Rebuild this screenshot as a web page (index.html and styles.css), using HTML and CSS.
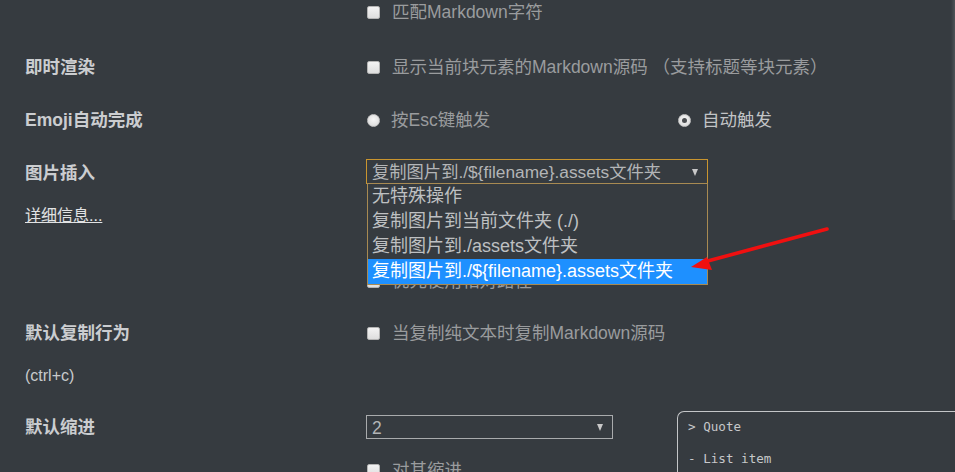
FILE: index.html
```html
<!DOCTYPE html>
<html lang="zh-CN">
<head>
<meta charset="utf-8">
<title>偏好设置</title>
<link rel="stylesheet" href="styles.css">
</head>
<body>
<div class="page">
  <div class="row row-first">
    <div class="label"></div>
    <div class="opt"><span class="cb"></span><span>匹配Markdown字符</span></div>
  </div>

  <div class="row row-live">
    <div class="label">即时渲染</div>
    <div class="opt"><span class="cb"></span><span>显示当前块元素的Markdown源码 （支持标题等块元素）</span></div>
  </div>

  <div class="row row-emoji">
    <div class="label">Emoji自动完成</div>
    <div class="opt"><span class="rb"></span><span>按Esc键触发</span></div>
    <div class="opt opt-on"><span class="rb rb-on"></span><span>自动触发</span></div>
  </div>

  <div class="row row-image">
    <div class="label-col">
      <div class="label">图片插入</div>
      <a class="more" href="#">详细信息...</a>
    </div>
    <div class="ctrl-col">
      <div class="select select-wide select-focus">
        <span class="select-text">复制图片到./${filename}.assets文件夹</span>
        <span class="caret"></span>
      </div>
      <div class="opt sub sub-first"><span class="cb"></span><span>对本地位置的图片应用上述规则</span></div>
      <div class="opt sub"><span class="cb"></span><span>对网络位置的图片应用上述规则</span></div>
      <div class="opt sub"><span class="cb"></span><span>优先使用相对路径</span></div>
      <ul class="popup">
        <li>无特殊操作</li>
        <li>复制图片到当前文件夹 (./)</li>
        <li>复制图片到./assets文件夹</li>
        <li class="picked">复制图片到./${filename}.assets文件夹</li>
      </ul>
    </div>
  </div>

  <div class="row row-copy">
    <div class="label-col">
      <div class="label">默认复制行为</div>
      <div class="hint">(ctrl+c)</div>
    </div>
    <div class="opt"><span class="cb"></span><span>当复制纯文本时复制Markdown源码</span></div>
  </div>

  <div class="row row-indent">
    <div class="label-col">
      <div class="label">默认缩进</div>
    </div>
    <div class="ctrl-col">
      <div class="select select-small">
        <span class="select-text">2</span>
        <span class="caret"></span>
      </div>
      <div class="opt sub-indent"><span class="cb"></span><span>对其缩进</span></div>
    </div>
    <div class="preview">
      <div class="code">&gt; Quote</div>
      <div class="code">- List item</div>
    </div>
  </div>
</div>

<div class="scroll-edge"></div>

<svg class="annot" width="955" height="472" viewBox="0 0 955 472" xmlns="http://www.w3.org/2000/svg">
  <line x1="827" y1="229" x2="704" y2="262" stroke="#f01010" stroke-width="3.6" stroke-linecap="round"/>
  <polygon points="691,267 707,257 712,270" fill="#f01010"/>
</svg>
</body>
</html>
```

FILE: styles.css
```css
html, body {
  margin: 0;
  padding: 0;
  background: #363b40;
  overflow: hidden;
}

body {
  width: 955px;
  height: 472px;
  position: relative;
  font-family: "Liberation Sans", "Noto Sans CJK SC", sans-serif;
}

.page {
  padding-left: 25px;
}

.row {
  display: grid;
  grid-template-columns: 341px 311px 1fr;
  align-items: start;
}

.label {
  height: 26px;
  line-height: 26px;
  font-size: 17.5px;
  font-weight: bold;
  color: #cbcdd0;
  white-space: nowrap;
}

.opt {
  display: flex;
  align-items: center;
  height: 26px;
  line-height: 26px;
  font-size: 17.5px;
  color: #9a9c9e;
  white-space: nowrap;
}

.opt-on {
  color: #c2c4c6;
}

.cb {
  flex: none;
  width: 11px;
  height: 11px;
  margin-left: 1px;
  margin-right: 12px;
  border: 1px solid #b4b4b4;
  border-radius: 2px;
  background: linear-gradient(#f3f3f3, #dedede);
}

.rb {
  flex: none;
  width: 13px;
  height: 13px;
  margin-left: 1px;
  margin-right: 11px;
  border-radius: 50%;
  background: radial-gradient(circle at 50% 40%, #f6f6f6, #d6d6d6);
  box-sizing: border-box;
  border: 1px solid #c4c4c4;
  position: relative;
}

.rb-on::after {
  content: "";
  position: absolute;
  left: 3px;
  top: 3px;
  width: 5px;
  height: 5px;
  border-radius: 50%;
  background: #4a4d50;
}

/* rows */
.row-first {
  margin-top: -1px;
}

.row-live {
  margin-top: 29px;
}

.row-emoji {
  margin-top: 27px;
}

.row-image {
  margin-top: 26px;
}

.row-copy {
  margin-top: 26px;
}

.row-indent {
  margin-top: 25px;
}

.label-col .label {
  margin-top: 1px;
}

.more {
  display: block;
  margin-top: 20px;
  height: 20px;
  line-height: 20px;
  font-size: 16px;
  color: #e2e3e4;
  text-decoration: underline;
  white-space: nowrap;
  width: max-content;
}

.hint {
  margin-top: 20px;
  height: 20px;
  line-height: 20px;
  font-size: 16px;
  color: #c8cacc;
}

.row-copy .label-col .label {
  margin-top: 0;
}

.row-copy .opt {
  margin-top: 0;
}

.ctrl-col {
  position: relative;
}

.select {
  box-sizing: border-box;
  display: flex;
  align-items: center;
  justify-content: space-between;
  border: 1px solid #a9abad;
  padding: 0 9px 0 5px;
  color: #b3b5b7;
  white-space: nowrap;
}

.select-wide {
  width: 342px;
  height: 25px;
  font-size: 17.3px;
  line-height: 23px;
}

.select-focus {
  border-color: #c9952f;
}

.select-small {
  width: 247px;
  height: 24px;
  margin-top: 4px;
  font-size: 17.5px;
  line-height: 22px;
}

.select-text {
  padding-top: 2px;
}

.caret {
  width: 0;
  height: 0;
  border-left: 3.5px solid transparent;
  border-right: 3.5px solid transparent;
  border-top: 7px solid #c8c8c8;
  margin-top: 1px;
}

.sub {
  margin-top: 6px;
}

.sub-first {
  margin-top: 20px;
}

.sub-indent {
  margin-top: 18px;
}

.row-indent .label-col .label {
  margin-top: 3px;
}

/* popup list over content */
.popup {
  position: absolute;
  left: 1px;
  top: 24px;
  box-sizing: border-box;
  width: 341px;
  margin: 0;
  padding: 0;
  list-style: none;
  background: #363b40;
  border: 1px solid #a88a52;
  font-size: 18px;
  color: #bec0c2;
}

.popup li {
  height: 25px;
  line-height: 25px;
  padding-left: 4px;
  white-space: nowrap;
}

.popup li.picked {
  background: #1e90ff;
  color: #ffffff;
}

/* preview box */
.preview {
  box-sizing: border-box;
  width: 300px;
  height: 120px;
  border: 1px solid #c4c6c8;
  border-right: none;
  border-bottom: none;
  border-top-left-radius: 7px;
  padding-left: 10px;
}

.code {
  height: 32px;
  line-height: 30px;
  font-family: "DejaVu Sans Mono", "Liberation Mono", monospace;
  font-size: 12.6px;
  color: #c6c8ca;
  white-space: pre;
}

.scroll-edge {
  position: absolute;
  right: 0;
  top: 0;
  width: 4px;
  height: 220px;
  background: linear-gradient(to right, rgba(255,255,255,0), rgba(255,255,255,0.12));
}

.annot {
  position: absolute;
  left: 0;
  top: 0;
  pointer-events: none;
}
```
